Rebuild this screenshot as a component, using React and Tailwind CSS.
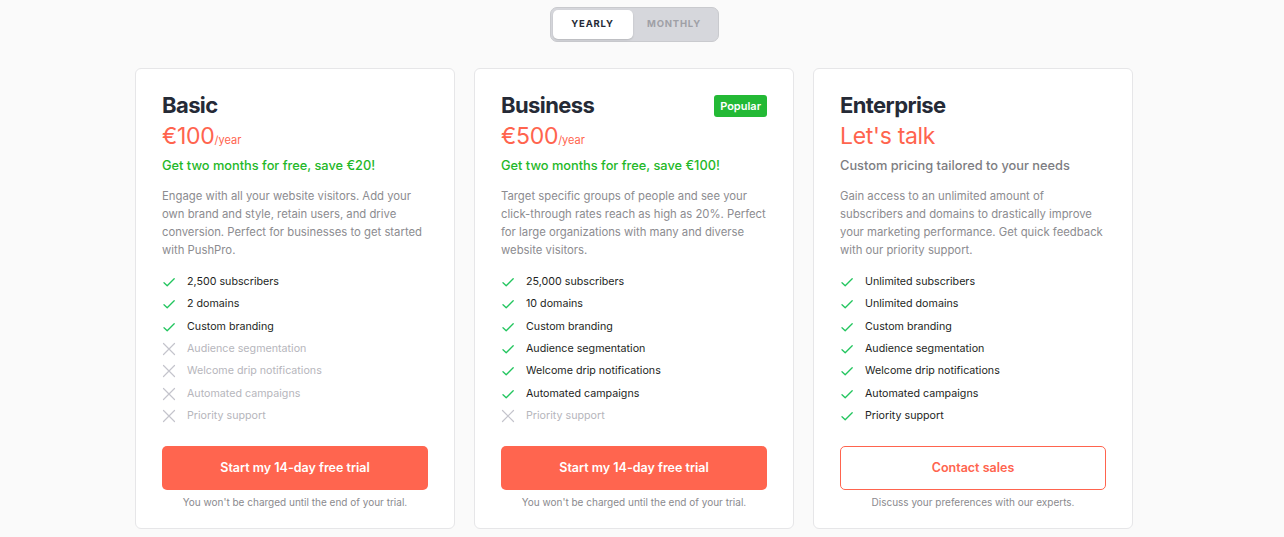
import React from "react";

const plans = [
  {
    name: "Basic",
    price: "€100",
    sub: "Get two months for free, save €20!",
    desc: "Engage with all your website visitors. Add your own brand and style, retain users, and drive conversion. Perfect for businesses to get started with PushPro.",
    features: [
      ["2,500 subscribers", true],
      ["2 domains", true],
      ["Custom branding", true],
      ["Audience segmentation", false],
      ["Welcome drip notifications", false],
      ["Automated campaigns", false],
      ["Priority support", false],
    ],
    cta: "Start my 14-day free trial",
    note: "You won't be charged until the end of your trial.",
  },
  {
    name: "Business",
    price: "€500",
    popular: true,
    sub: "Get two months for free, save €100!",
    desc: "Target specific groups of people and see your click-through rates reach as high as 20%. Perfect for large organizations with many and diverse website visitors.",
    features: [
      ["25,000 subscribers", true],
      ["10 domains", true],
      ["Custom branding", true],
      ["Audience segmentation", true],
      ["Welcome drip notifications", true],
      ["Automated campaigns", true],
      ["Priority support", false],
    ],
    cta: "Start my 14-day free trial",
    note: "You won't be charged until the end of your trial.",
  },
  {
    name: "Enterprise",
    talk: true,
    sub: "Custom pricing tailored to your needs",
    desc: "Gain access to an unlimited amount of subscribers and domains to drastically improve your marketing performance. Get quick feedback with our priority support.",
    features: [
      ["Unlimited subscribers", true],
      ["Unlimited domains", true],
      ["Custom branding", true],
      ["Audience segmentation", true],
      ["Welcome drip notifications", true],
      ["Automated campaigns", true],
      ["Priority support", true],
    ],
    cta: "Contact sales",
    outline: true,
    note: "Discuss your preferences with our experts.",
  },
];

function Check() {
  return (
    <svg width="14" height="14" viewBox="0 0 14 14" fill="none" className="shrink-0">
      <path d="M2 7.8 L5.2 10.8 L12.2 3.8" stroke="#22c55e" strokeWidth="1.3" strokeLinecap="round" strokeLinejoin="round" />
    </svg>
  );
}

function Cross() {
  return (
    <svg width="14" height="14" viewBox="0 0 14 14" fill="none" className="shrink-0">
      <path d="M1.5 1.5 L12.5 12.5 M12.5 1.5 L1.5 12.5" stroke="#c4c4cc" strokeWidth="1.2" strokeLinecap="round" />
    </svg>
  );
}

function Card({ p }) {
  return (
    <div className="w-[320px] bg-white border border-[#e6e6e8] rounded-[6px] px-[26px] pt-[22px] pb-[19px] flex flex-col">
      <div className="flex items-start justify-between">
        <h2 className="text-[22px] leading-[28px] font-bold text-[#252a36] tracking-[-0.6px]">{p.name}</h2>
        {p.popular && (
          <span className="mt-[4px] h-[22px] px-[6px] flex items-center rounded-[3px] bg-[#23b935] text-white text-[11px] font-semibold">
            Popular
          </span>
        )}
      </div>
      {p.talk ? (
        <div className="mt-[1px] h-[32px] text-[23px] leading-[32px] text-[#ff644e] tracking-[-0.3px]">Let's talk</div>
      ) : (
        <div className="mt-[1px] h-[32px] text-[23px] leading-[32px] text-[#ff644e] tracking-[-0.3px]">
          {p.price}
          <span className="text-[11px] leading-none tracking-normal">/year</span>
        </div>
      )}
      <div
        className={
          "mt-[5px] text-[12.8px] leading-[18px] font-medium " +
          (p.talk ? "text-[#7d7d82]" : "text-[#1fb829]")
        }
      >
        {p.sub}
      </div>
      <p className="mt-[12px] text-[11.3px] leading-[18px] text-[#8c8c90]">{p.desc}</p>
      <ul className="mt-[12px] flex flex-col">
        {p.features.map(([f, ok]) => (
          <li key={f} className="flex items-center gap-[11px] h-[22.33px] text-[10.7px]">
            {ok ? <Check /> : <Cross />}
            <span className={ok ? "text-[#1e1f24]" : "text-[#b6b6bc]"}>{f}</span>
          </li>
        ))}
      </ul>
      <button
        className={
          "mt-[19px] h-[44px] w-full rounded-[5px] text-[12.5px] font-semibold " +
          (p.outline
            ? "border border-[#ff644e] text-[#ff644e] bg-white"
            : "bg-[#ff654f] text-white")
        }
      >
        {p.cta}
      </button>
      <div className="mt-[5px] text-center text-[10px] leading-[14px] text-[#8a8a8e]">{p.note}</div>
    </div>
  );
}

export default function App() {
  return (
    <div
      className="min-h-[537px] w-full bg-[#fafafa] flex flex-col items-center pt-[7px] pr-[16px]"
      style={{ fontFamily: "Inter, 'Noto Sans', sans-serif" }}
    >
      <div className="flex p-[2px] rounded-[7px] bg-[#d6d7dc] border border-[#c9cace]">
        <button className="w-[80px] h-[29px] rounded-[5px] bg-white shadow-[0_1px_2px_rgba(0,0,0,0.15)] text-[9.5px] font-bold tracking-[0.8px] text-[#252a36]">
          YEARLY
        </button>
        <button className="w-[83px] h-[29px] text-[9.5px] font-bold tracking-[0.8px] text-[#9fa0a6]">
          MONTHLY
        </button>
      </div>
      <div className="mt-[26px] flex gap-[19px]">
        {plans.map((p) => (
          <Card key={p.name} p={p} />
        ))}
      </div>
    </div>
  );
}
